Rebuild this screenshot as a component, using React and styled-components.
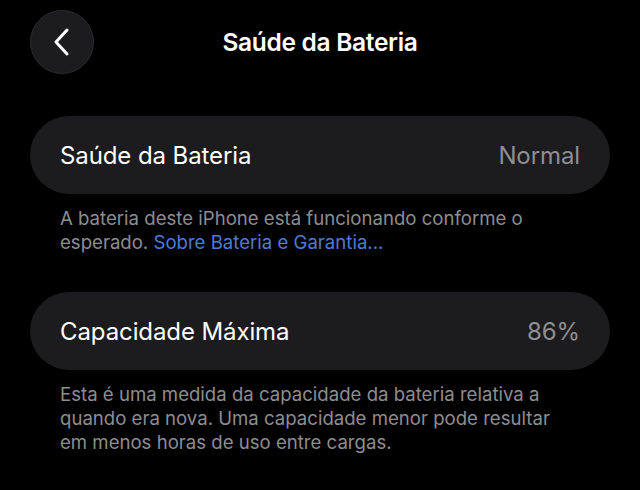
import React from 'react';
import styled, { createGlobalStyle } from 'styled-components';

const GlobalStyle = createGlobalStyle`
  html, body {
    margin: 0;
    padding: 0;
    background: #000;
  }
  body {
    font-family: Inter, "Noto Sans", "Liberation Sans", sans-serif;
    color: #fff;
    -webkit-font-smoothing: antialiased;
  }
`;

const Screen = styled.div`
  width: 640px;
  height: 490px;
  overflow: hidden;
  background: #000;
  display: flex;
  flex-direction: column;
`;

const NavBar = styled.header`
  position: relative;
  height: 64px;
  margin-top: 10px;
  display: flex;
  align-items: center;
  justify-content: center;
`;

const BackButton = styled.button`
  position: absolute;
  left: 30px;
  top: 0;
  width: 64px;
  height: 64px;
  border-radius: 50%;
  border: 1px solid #2c2c2e;
  background: #1c1c1e;
  display: flex;
  align-items: center;
  justify-content: center;
  padding: 0;
  cursor: pointer;
`;

const Title = styled.h1`
  margin: 0;
  font-size: 24.5px;
  font-weight: 600;
  letter-spacing: -0.3px;
  color: #fff;
`;

const Section = styled.section`
  margin: ${(p) => p.$top}px 30px 0;
`;

const Card = styled.div`
  height: 78px;
  border-radius: 39px;
  background: #1c1c1e;
  display: flex;
  align-items: center;
  justify-content: space-between;
  padding: 0 30px;
  box-sizing: border-box;
`;

const Label = styled.span`
  font-size: 24px;
  font-weight: 400;
  letter-spacing: -0.1px;
  color: #fff;
`;

const Value = styled(Label)`
  color: #8e8e93;
`;

const Footnote = styled.p`
  margin: 12px 0 0;
  padding: 0 50px 0 30px;
  font-size: 18.6px;
  line-height: 24px;
  letter-spacing: 0;
  color: #8d8d92;
`;

const Link = styled.a`
  color: #4a7dd6;
  text-decoration: none;
`;

function Chevron() {
  return (
    <svg width="18" height="28" viewBox="0 0 18 28" fill="none">
      <path
        d="M14 2 L3 14 L14 26"
        stroke="#fff"
        strokeWidth="3"
        strokeLinecap="round"
        strokeLinejoin="round"
      />
    </svg>
  );
}

export default function App() {
  return (
    <Screen>
      <GlobalStyle />
      <NavBar>
        <BackButton aria-label="Voltar">
          <Chevron />
        </BackButton>
        <Title>Saúde da Bateria</Title>
      </NavBar>

      <Section $top={42}>
        <Card>
          <Label>Saúde da Bateria</Label>
          <Value>Normal</Value>
        </Card>
        <Footnote>
          A bateria deste iPhone está funcionando conforme o esperado.{' '}
          <Link href="#">Sobre Bateria e Garantia...</Link>
        </Footnote>
      </Section>

      <Section $top={38}>
        <Card>
          <Label>Capacidade Máxima</Label>
          <Value>86%</Value>
        </Card>
        <Footnote>
          Esta é uma medida da capacidade da bateria relativa a quando era
          nova. Uma capacidade menor pode resultar em menos horas de uso entre
          cargas.
        </Footnote>
      </Section>
    </Screen>
  );
}
